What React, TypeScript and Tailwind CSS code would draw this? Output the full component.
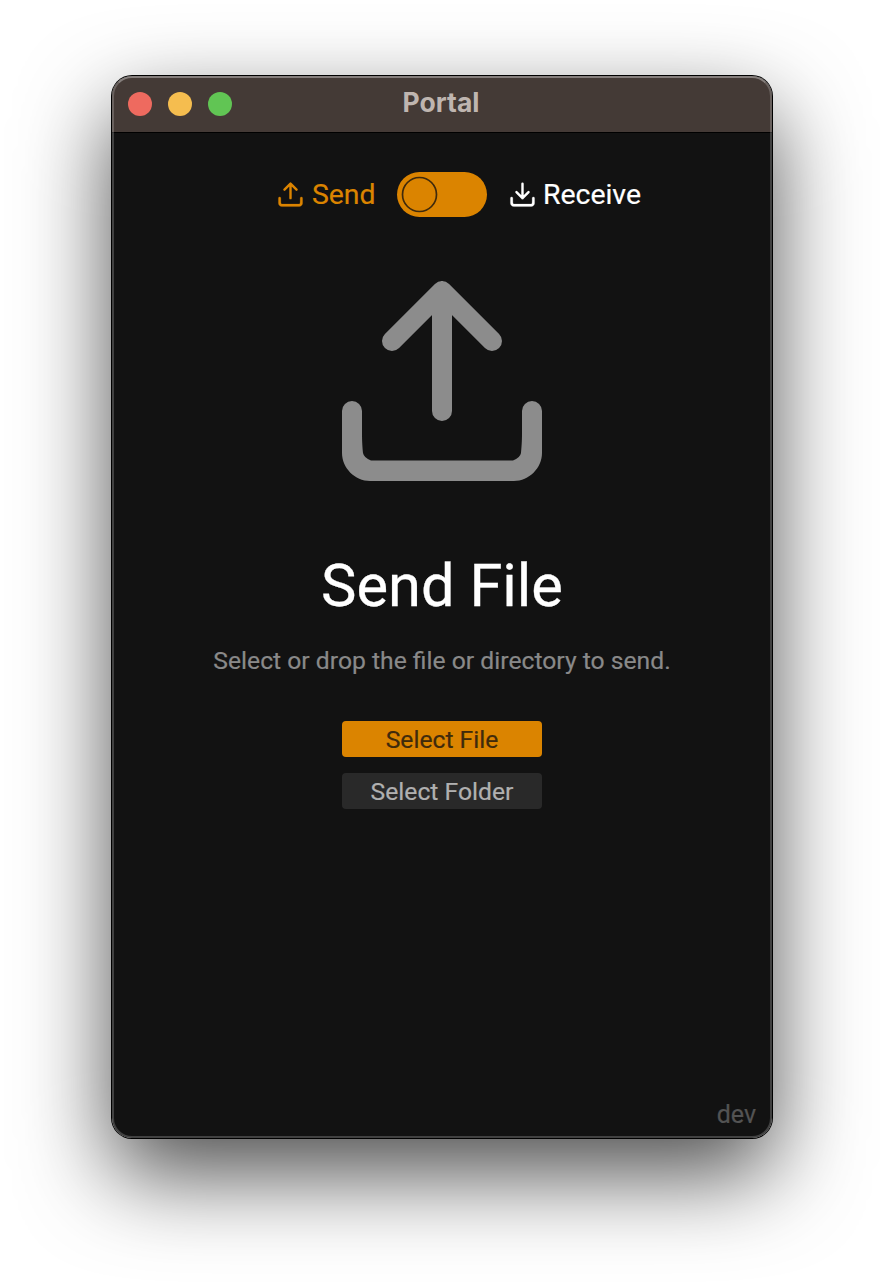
import React from "react";

const tray =
  "M3 14a1 1 0 0 1 1 1v2.2c0 .9.05 1.5.1 2q.1.5.8.75h14.2q.7-.25.8-.75c.05-.5.1-1.1.1-2V15a1 1 0 0 1 2 0v4.2c0 1.5-1.3 2.8-2.8 2.8H4.8C3.3 22 2 20.7 2 19.2V15a1 1 0 0 1 1-1z";

function TransferIcon({ direction, className }: { direction: "up" | "down"; className: string }) {
  return (
    <svg viewBox="0 0 24 24" className={className} aria-hidden="true">
      <path d={tray} fill="currentColor" />
      <path
        d={direction === "up" ? "M12 15V3M7 8l5-5 5 5" : "M12 3v12M7 10l5 5 5-5"}
        fill="none"
        stroke="currentColor"
        strokeWidth="2"
        strokeLinecap="round"
        strokeLinejoin="round"
      />
    </svg>
  );
}

function TitleBar() {
  return (
    <header className="grid h-[57px] shrink-0 grid-cols-[1fr_auto_1fr] items-center border-b border-black bg-[#443a36] px-4">
      <div className="flex gap-4">
        <span className="size-6 rounded-full bg-[#ee6a5f]" />
        <span className="size-6 rounded-full bg-[#f5bd4f]" />
        <span className="size-6 rounded-full bg-[#61c554]" />
      </div>
      <h1 className="-mt-1 pr-0.5 font-['Inter'] text-[26.5px] leading-8 font-bold text-[#bfb5b0]">Portal</h1>
    </header>
  );
}

function ModeSwitch() {
  return (
    <div className="grid h-[45px] w-full grid-cols-[1fr_90px_1fr] items-center text-[28.4px] leading-[44px] [-webkit-text-stroke:0.2px]">
      <div className="flex items-center justify-end gap-[6.5px] pr-[21.5px] text-[#db8400]">
        <TransferIcon direction="up" className="size-[29px] [stroke-width:0.2] stroke-current" />
        <span className="pt-px">Send</span>
      </div>
      <button type="button" role="switch" aria-checked="false" aria-label="Receive mode" className="flex h-[45px] items-center rounded-full bg-[#db8400] pl-1">
        <svg viewBox="0 0 37 37" className="size-[37px]" aria-hidden="true">
          <circle cx="18.5" cy="18.5" r="17" fill="none" stroke="#3f2a0c" strokeWidth="1.7" />
        </svg>
      </button>
      <div className="flex items-center gap-[6.5px] pl-[20.5px] text-white">
        <TransferIcon direction="down" className="size-[29px] [stroke-width:0.2] stroke-current" />
        <span className="pt-px">Receive</span>
      </div>
    </div>
  );
}

export default function App() {
  return (
    <div className="h-[1286px] w-[884px] overflow-hidden bg-white px-28 pt-[76px] font-['Roboto',sans-serif]">
      <div className="relative h-[1062px] w-[660px] rounded-[20px] shadow-[0_0_0_1px_#000,0_36px_90px_rgba(0,0,0,0.7)]">
        <div className="flex h-full flex-col overflow-hidden rounded-[20px] bg-[#121212]">
          <TitleBar />
          <main className="flex flex-1 flex-col items-center pt-[39px]">
            <ModeSwitch />
            <TransferIcon direction="up" className="mt-11 size-60 text-[#8c8c8c]" />
            <h2 className="mt-[50px] text-[59.6px] leading-[70px] text-white [-webkit-text-stroke:0.3px]">Send File</h2>
            <p className="mt-[25px] text-[24.7px] leading-[30px] text-[#898989] [-webkit-text-stroke:0.2px]">Select or drop the file or directory to send.</p>
            <div className="mt-[45px] flex w-[200px] flex-col gap-4 text-[24.7px] leading-9 [-webkit-text-stroke:0.2px]">
              <button type="button" className="h-9 rounded bg-[#db8400] pt-px text-[#3f2a0c]">Select File</button>
              <button type="button" className="h-9 rounded bg-[#292929] pt-px text-[#b0b0b0]">Select Folder</button>
            </div>
            <footer className="mt-auto mb-2 self-end pr-4 text-[25px] leading-[30px] text-[#535353] [-webkit-text-stroke:0.2px]">dev</footer>
          </main>
        </div>
        <div className="pointer-events-none absolute inset-0 rounded-[20px] border-2 border-white/20 border-t-white/35" />
      </div>
    </div>
  );
}
